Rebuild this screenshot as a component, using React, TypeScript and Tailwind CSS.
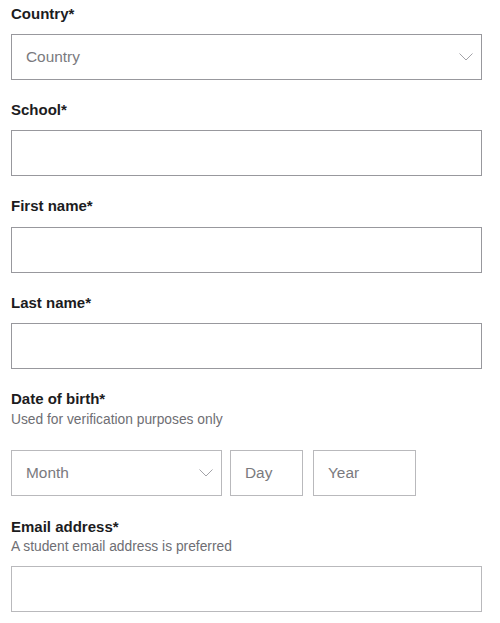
import React from 'react';

const font = { fontFamily: '"Liberation Sans", Arial, sans-serif' };

function Chevron() {
  return (
    <svg width="14" height="8" viewBox="0 0 14 8" fill="none" className="shrink-0">
      <path d="M0.5 0.5 L7 7 L13.5 0.5" stroke="#a3a3a8" strokeWidth="1" />
    </svg>
  );
}

function Label({ children }: { children: React.ReactNode }) {
  return <div className="text-[15px] leading-[20px] font-bold text-[#1c1c1e]">{children}</div>;
}

function Helper({ children }: { children: React.ReactNode }) {
  return <div className="text-[13.8px] leading-[18px] text-[#6e6e73]">{children}</div>;
}

function TextBox({ light = false }: { light?: boolean }) {
  return (
    <div className={`h-[46px] w-full border bg-white ${light ? 'border-[#b9b9bc]' : 'border-[#98989d]'}`} />
  );
}

function App() {
  return (
    <div className="min-h-screen bg-white pl-[11px] pr-[18px] pt-[4px]" style={font}>
      {/* Country */}
      <Label>Country*</Label>
      <div className="mt-[10px] h-[46px] border border-[#98989d] flex items-center justify-between pl-[14px] pr-[8px]">
        <span className="text-[15.4px] text-[#7a7a7e]">Country</span>
        <Chevron />
      </div>

      {/* School */}
      <div className="mt-[20px]">
        <Label>School*</Label>
        <div className="mt-[10px]">
          <TextBox />
        </div>
      </div>

      {/* First name */}
      <div className="mt-[20px]">
        <Label>First name*</Label>
        <div className="mt-[11px]">
          <TextBox />
        </div>
      </div>

      {/* Last name */}
      <div className="mt-[20px]">
        <Label>Last name*</Label>
        <div className="mt-[10px]">
          <TextBox />
        </div>
      </div>

      {/* Date of birth */}
      <div className="mt-[20px]">
        <Label>Date of birth*</Label>
        <div className="mt-[2px]">
          <Helper>Used for verification purposes only</Helper>
        </div>
        <div className="mt-[21px] flex gap-[8px] text-[15.4px] text-[#7a7a7e]">
          <div className="w-[211px] h-[46px] border border-[#b9b9bc] flex items-center justify-between pl-[14px] pr-[8px]">
            <span>Month</span>
            <Chevron />
          </div>
          <div className="w-[73px] h-[46px] border border-[#b9b9bc] flex items-center pl-[14px]">
            <span>Day</span>
          </div>
          <div className="ml-[2px] w-[103px] h-[46px] border border-[#b9b9bc] flex items-center pl-[14px]">
            <span>Year</span>
          </div>
        </div>
      </div>

      {/* Email */}
      <div className="mt-[21px]">
        <Label>Email address*</Label>
        <div className="mt-[1px]">
          <Helper>A student email address is preferred</Helper>
        </div>
        <div className="mt-[10px]">
          <TextBox light />
        </div>
      </div>
    </div>
  );
}

export default App;
